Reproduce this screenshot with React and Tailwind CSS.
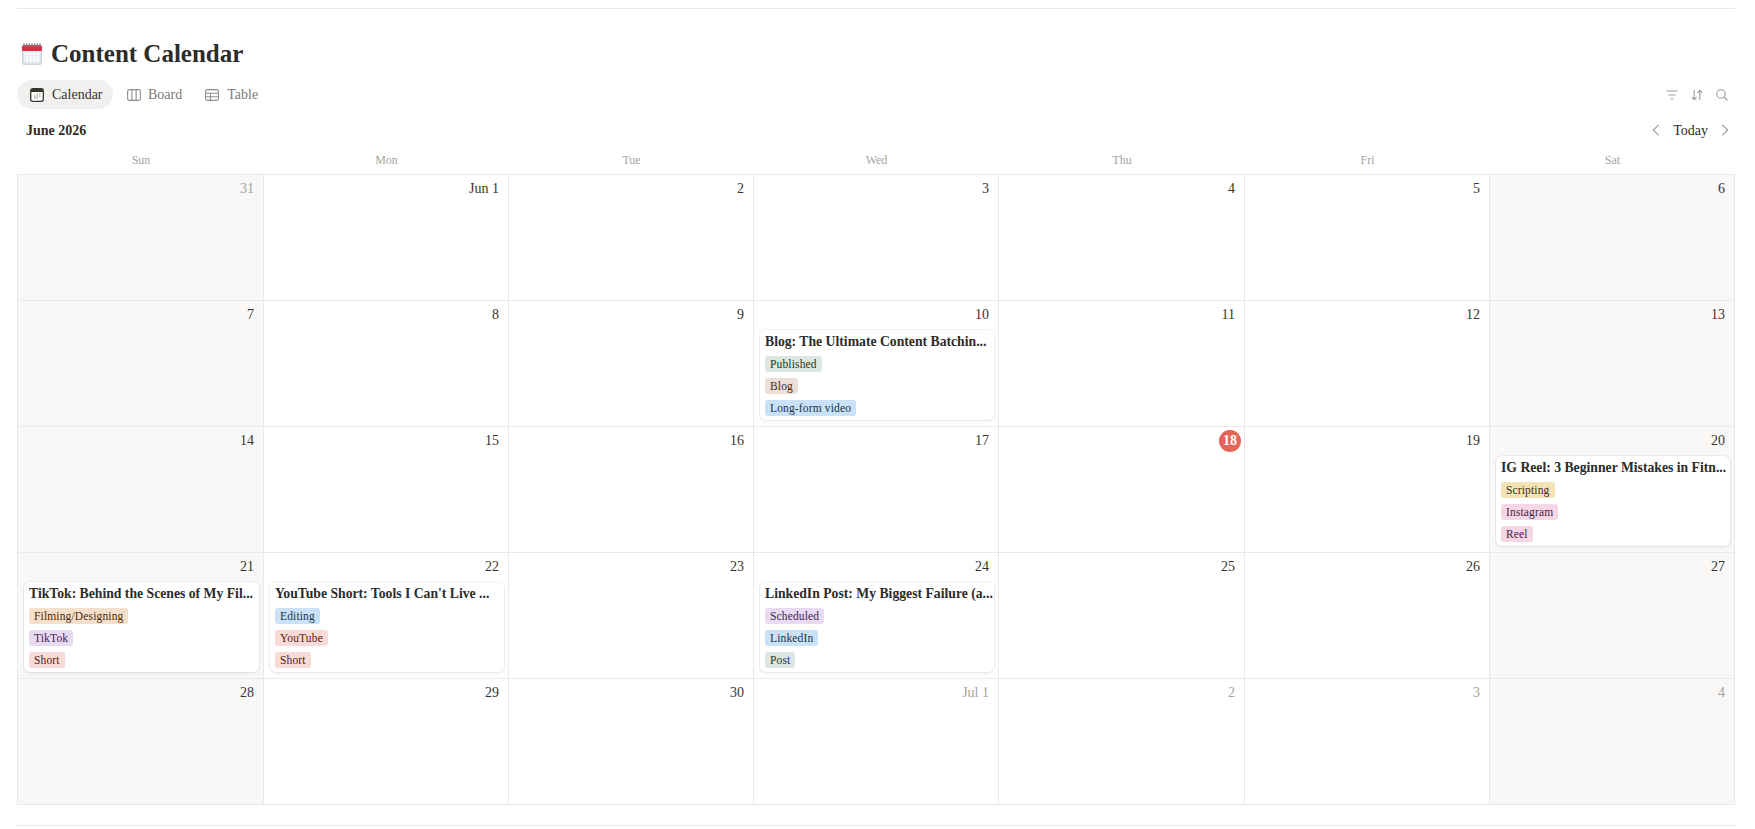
import React from "react";

const chipColors = {
  green: "bg-[#dbe8e0] text-[#1c3829]",
  brown: "bg-[#ecdfd8] text-[#44291d]",
  blue: "bg-[#c9e2f7] text-[#183347]",
  orange: "bg-[#f4dfca] text-[#49290e]",
  purple: "bg-[#e8daf2] text-[#412454]",
  red: "bg-[#f8dad6] text-[#5d1715]",
  yellow: "bg-[#f3e4b8] text-[#402c1b]",
  pink: "bg-[#f5d6e5] text-[#4c2337]",
};

const cards = {
  10: {
    title: "Blog: The Ultimate Content Batchin...",
    tags: [["Published", "green"], ["Blog", "brown"], ["Long-form video", "blue"]],
  },
  20: {
    title: "IG Reel: 3 Beginner Mistakes in Fitn...",
    tags: [["Scripting", "yellow"], ["Instagram", "pink"], ["Reel", "pink"]],
  },
  21: {
    title: "TikTok: Behind the Scenes of My Fil...",
    tags: [["Filming/Designing", "orange"], ["TikTok", "purple"], ["Short", "red"]],
  },
  22: {
    title: "YouTube Short: Tools I Can't Live ...",
    tags: [["Editing", "blue"], ["YouTube", "red"], ["Short", "red"]],
  },
  24: {
    title: "LinkedIn Post: My Biggest Failure (a...",
    tags: [["Scheduled", "purple"], ["LinkedIn", "blue"], ["Post", "green"]],
  },
};

const days = [
  { label: "31", muted: true }, { label: "Jun 1" }, { label: "2" }, { label: "3" }, { label: "4" }, { label: "5" }, { label: "6" },
  { label: "7" }, { label: "8" }, { label: "9" }, { label: "10", card: 10 }, { label: "11" }, { label: "12" }, { label: "13" },
  { label: "14" }, { label: "15" }, { label: "16" }, { label: "17" }, { label: "18", today: true }, { label: "19" }, { label: "20", card: 20 },
  { label: "21", card: 21 }, { label: "22", card: 22 }, { label: "23" }, { label: "24", card: 24 }, { label: "25" }, { label: "26" }, { label: "27" },
  { label: "28" }, { label: "29" }, { label: "30" }, { label: "Jul 1", muted: true }, { label: "2", muted: true }, { label: "3", muted: true }, { label: "4", muted: true },
];

const weekdays = ["Sun", "Mon", "Tue", "Wed", "Thu", "Fri", "Sat"];

const CalendarEmoji = () => (
  <svg width="20" height="22" viewBox="0 0 20 22">
    <rect x="0" y="2" width="20" height="20" rx="2" fill="#ccd6dd" />
    <rect x="1.5" y="8" width="17" height="12.5" fill="#e6ecf0" />
    <path d="M0 8V4a2 2 0 0 1 2-2h16a2 2 0 0 1 2 2v4z" fill="#dd2e44" />
    <path d="M2 .5v3.5M4.7 .5v3.5M7.4 .5v3.5M10 .5v3.5M12.7 .5v3.5M15.4 .5v3.5M18 .5v3.5" stroke="#8a7f86" strokeWidth="1.4" />
    <path d="M2 11h16M2 14h16M2 17h16M5 9v11M8.5 9v11M12 9v11M15.5 9v11" stroke="#fff" strokeWidth="1" />
  </svg>
);

const CalendarTabIcon = () => (
  <svg width="14" height="14" viewBox="0 0 14 14">
    <rect x="0.7" y="0.7" width="12.6" height="12.6" rx="2" fill="#fff" stroke="#37352f" strokeWidth="1.3" />
    <path d="M1 4V2.5A1.5 1.5 0 0 1 2.5 1h9A1.5 1.5 0 0 1 13 2.5V4z" fill="#37352f" />
    <path d="M6.5 6h1.5M9 6h1.5M4 8h1.5M6.5 8h1.5M9 8h1.5M4 10h1.5M6.5 10h1.5" stroke="#8b8a86" strokeWidth="1.2" />
  </svg>
);

const BoardIcon = () => (
  <svg width="14" height="12" viewBox="0 0 14 12" fill="none" stroke="#8f8d89" strokeWidth="1.1">
    <rect x="0.6" y="0.6" width="12.8" height="10.8" rx="1.8" />
    <path d="M4.9 0.6v10.8M9.1 0.6v10.8" />
  </svg>
);

const TableIcon = () => (
  <svg width="14" height="12" viewBox="0 0 14 12" fill="none" stroke="#8f8d89" strokeWidth="1.1">
    <rect x="0.6" y="0.6" width="12.8" height="10.8" rx="1.8" />
    <path d="M0.6 4.2h12.8M0.6 7.8h12.8M5.4 4.2v7.2" />
  </svg>
);

const FilterIcon = () => (
  <svg width="12" height="10" viewBox="0 0 12 10" fill="none" stroke="#9b9a97" strokeWidth="1.2">
    <path d="M0.5 1h11M2.5 5h7M4.5 9h3" />
  </svg>
);

const SortIcon = () => (
  <svg width="12" height="12" viewBox="0 0 12 12" fill="none" stroke="#9b9a97" strokeWidth="1.1">
    <path d="M3.2 1v9.6M0.8 8.2l2.4 2.6 2.4-2.6M8.8 11V1.4M6.4 3.8l2.4-2.6 2.4 2.6" />
  </svg>
);

const SearchIcon = () => (
  <svg width="12" height="12" viewBox="0 0 12 12" fill="none" stroke="#9b9a97" strokeWidth="1.1">
    <circle cx="5" cy="5" r="4.2" />
    <path d="M8 8l3.5 3.5" />
  </svg>
);

const Chevron = ({ left }) => (
  <svg width="8" height="12" viewBox="0 0 8 12" fill="none" stroke="#9b9a97" strokeWidth="1.1">
    <path d={left ? "M6.8 0.8L1.2 6l5.6 5.2" : "M1.2 0.8L6.8 6l-5.6 5.2"} />
  </svg>
);

const Chip = ({ name, color }) => (
  <div className="flex h-[17px] items-center">
    <span className={`h-[16px] rounded-[3px] px-[5px] text-[11.5px] leading-[16px] tracking-[0.15px] ${chipColors[color]}`}>
      {name}
    </span>
  </div>
);

const Card = ({ card }) => (
  <div className="mt-[2px] ml-[6px] mr-[4px] h-[90px] rounded-[6px] bg-white pl-[5px] pt-[2px] shadow-[0_0_0_1px_rgba(15,15,15,0.05),0_2px_4px_rgba(15,15,15,0.05)]">
    <div className="h-[20px] truncate text-[13.7px] font-bold leading-[20px] text-[#2c2c2b]">{card.title}</div>
    <div className="mt-[3px] flex flex-col gap-[5px]">
      {card.tags.map(([name, color]) => (
        <Chip key={name} name={name} color={color} />
      ))}
    </div>
  </div>
);

const DayCell = ({ day, index }) => {
  const weekend = index % 7 === 0 || index % 7 === 6;
  return (
    <div className={`h-[126px] border-r border-b border-[#e9e9e7] ${weekend ? "bg-[#f9f8f7]" : "bg-white"}`}>
      <div className="flex h-[27px] items-center justify-end pr-[5px]">
        {day.today ? (
          <span className="mr-[-2px] flex h-[22px] w-[22px] items-center justify-center rounded-full bg-[#e5645a] text-[14px] font-bold text-white">
            {day.label}
          </span>
        ) : (
          <span className={`pr-[4px] text-[14px] ${day.muted ? "text-[#a5a4a1]" : "text-[#37352f]"}`}>{day.label}</span>
        )}
      </div>
      {day.card && <Card card={cards[day.card]} />}
    </div>
  );
};

export default function App() {
  return (
    <div className="h-[829px] w-[1755px] overflow-hidden bg-white pr-[20px] pl-[17px] font-['Liberation_Serif',serif] text-[#37352f]">
      <div className="h-[9px] border-b border-[#e9e9e7]" />

      <div className="mt-[31px] flex h-[27px] items-center pl-[5px]">
        <CalendarEmoji />
        <h1 className="ml-[9px] text-[25px] font-bold leading-[27px] text-[#2c2c2b]">Content Calendar</h1>
      </div>

      <div className="mt-[13px] flex h-[29px] items-center justify-between">
        <div className="flex items-center">
          <div className="flex h-[29px] w-[96px] items-center gap-[8px] rounded-full bg-[#f1f0ee] pl-[13px] text-[14px] text-[#37352f]">
            <CalendarTabIcon />
            Calendar
          </div>
          <div className="ml-[14px] flex items-center gap-[7px] text-[14px] text-[#7d7c78]">
            <BoardIcon />
            Board
          </div>
          <div className="ml-[23px] flex items-center gap-[8px] text-[14px] text-[#7d7c78]">
            <TableIcon />
            Table
          </div>
        </div>
        <div className="flex items-center gap-[13px] pr-[7px]">
          <FilterIcon />
          <SortIcon />
          <SearchIcon />
        </div>
      </div>

      <div className="mt-[9px] flex h-[24px] items-center justify-between pr-[6px] pl-[9px]">
        <div className="text-[14px] font-bold text-[#2c2c2b]">June 2026</div>
        <div className="flex items-center text-[14px] text-[#2c2c2b]">
          <Chevron left />
          <span className="mx-[13px]">Today</span>
          <Chevron />
        </div>
      </div>

      <div className="mt-[4px] grid h-[28px] grid-cols-[246px_245px_245px_245px_246px_245px_245px] items-center pl-[1px] text-center text-[12px] text-[#a5a4a1]">
        {weekdays.map((d) => (
          <div key={d}>{d}</div>
        ))}
      </div>

      <div className="grid grid-cols-[246px_245px_245px_245px_246px_245px_245px] border-t border-l border-[#e9e9e7]">
        {days.map((day, i) => (
          <DayCell key={i} day={day} index={i} />
        ))}
      </div>

      <div className="mt-[20px] border-b border-[#e9e9e7]" />
    </div>
  );
}
